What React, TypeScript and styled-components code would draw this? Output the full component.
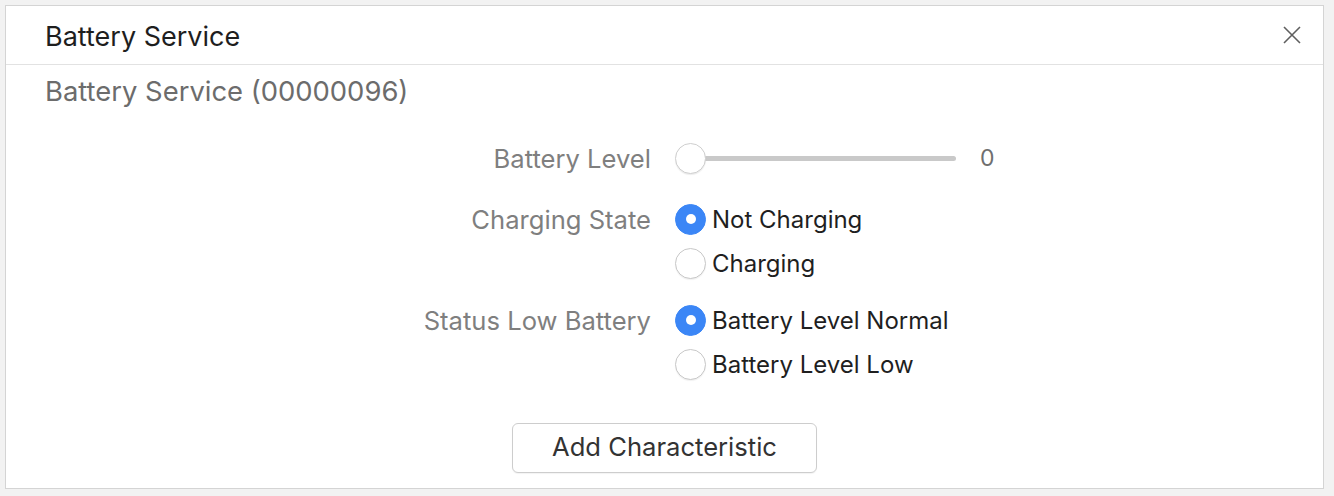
import React, { useState } from "react";
import styled, { createGlobalStyle } from "styled-components";

const GlobalStyle = createGlobalStyle`
  html, body {
    margin: 0;
    padding: 0;
    background: #f2f2f2;
  }
  body {
    font-family: Inter, "Liberation Sans", Arial, sans-serif;
  }
`;

const Panel = styled.div`
  margin: 5px 10px 0 5px;
  height: 484px;
  box-sizing: border-box;
  background: #ffffff;
  border: 1px solid #d4d4d4;
  display: flex;
  flex-direction: column;
`;

const Header = styled.div`
  height: 58px;
  flex-shrink: 0;
  display: flex;
  align-items: center;
  justify-content: space-between;
  padding: 0 20px 0 39px;
  border-bottom: 1px solid #e2e2e2;
`;

const Title = styled.h1`
  margin: 2px 0 0 0;
  font-size: 27px;
  font-weight: 400;
  color: #1e1e1e;
`;

const CloseButton = styled.button`
  border: none;
  background: none;
  padding: 0;
  width: 22px;
  height: 22px;
  display: flex;
  align-items: center;
  justify-content: center;
  cursor: pointer;
`;

const Subtitle = styled.div`
  height: 52px;
  line-height: 52px;
  padding-left: 39px;
  font-size: 27.4px;
  color: #6c6c6c;
`;

const Form = styled.div`
  display: grid;
  grid-template-columns: 645px 1fr;
  column-gap: 24px;
  row-gap: 13px;
  padding-top: 15px;
`;

const Label = styled.div<{ $height: number }>`
  height: ${(p) => p.$height}px;
  display: flex;
  align-items: center;
  justify-content: flex-end;
  font-size: 25.6px;
  color: #7f7f7f;
`;

const SliderRow = styled.div`
  height: 52px;
  display: flex;
  align-items: center;
  gap: 24px;
`;

const Track = styled.div`
  position: relative;
  width: 281px;
  height: 31px;
  display: flex;
  align-items: center;
`;

const TrackLine = styled.div`
  margin-left: 16px;
  flex: 1;
  height: 5px;
  border-radius: 3px;
  background: #c9c9c9;
`;

const Thumb = styled.div`
  position: absolute;
  left: 0;
  top: 0;
  width: 31px;
  height: 31px;
  box-sizing: border-box;
  border-radius: 50%;
  background: #ffffff;
  border: 1px solid #cfcfcf;
  box-shadow: 0 1px 1px rgba(0, 0, 0, 0.08);
`;

const Value = styled.span`
  font-size: 23px;
  color: #6f6f6f;
`;

const OptionGroup = styled.div`
  display: flex;
  flex-direction: column;
`;

const Option = styled.label`
  height: 44px;
  display: flex;
  align-items: center;
  gap: 6px;
  font-size: 24px;
  color: #1f1f1f;
  cursor: pointer;
`;

const RadioDot = styled.span<{ $checked: boolean }>`
  width: 31px;
  height: 31px;
  box-sizing: border-box;
  border-radius: 50%;
  flex-shrink: 0;
  display: flex;
  align-items: center;
  justify-content: center;
  background: ${(p) => (p.$checked ? "#3b86f6" : "#ffffff")};
  border: 1px solid ${(p) => (p.$checked ? "#3b86f6" : "#c8c8c8")};
  box-shadow: ${(p) =>
    p.$checked ? "none" : "0 1px 1px rgba(0, 0, 0, 0.06)"};

  &::after {
    content: "";
    display: ${(p) => (p.$checked ? "block" : "none")};
    width: 10px;
    height: 10px;
    border-radius: 50%;
    background: #ffffff;
  }
`;

const Footer = styled.div`
  display: flex;
  justify-content: center;
  padding-top: 37px;
`;

const AddButton = styled.button`
  width: 305px;
  height: 50px;
  padding: 0 0 4px 0;
  border: 1px solid #cdcdcd;
  border-radius: 6px;
  background: #ffffff;
  font-family: Inter, "Liberation Sans", Arial, sans-serif;
  font-size: 25.6px;
  color: #333333;
  box-shadow: 0 1px 1px rgba(0, 0, 0, 0.05);
  cursor: pointer;
`;

type RadioGroupProps = {
  options: string[];
  value: number;
  onChange: (i: number) => void;
};

const RadioGroup: React.FC<RadioGroupProps> = ({ options, value, onChange }) => (
  <OptionGroup>
    {options.map((opt, i) => (
      <Option key={opt} onClick={() => onChange(i)}>
        <RadioDot $checked={value === i} />
        {opt}
      </Option>
    ))}
  </OptionGroup>
);

const App: React.FC = () => {
  const [charging, setCharging] = useState(0);
  const [lowBattery, setLowBattery] = useState(0);

  return (
    <>
      <GlobalStyle />
      <Panel>
        <Header>
          <Title>Battery Service</Title>
          <CloseButton aria-label="Close">
            <svg width="18" height="18" viewBox="0 0 18 18">
              <path
                d="M1 1 L17 17 M17 1 L1 17"
                stroke="#5f5f5f"
                strokeWidth="1.6"
                fill="none"
              />
            </svg>
          </CloseButton>
        </Header>
        <Subtitle>Battery Service (00000096)</Subtitle>
        <Form>
          <Label $height={52}>Battery Level</Label>
          <SliderRow>
            <Track>
              <Thumb />
              <TrackLine />
            </Track>
            <Value>0</Value>
          </SliderRow>

          <Label $height={44}>Charging State</Label>
          <RadioGroup
            options={["Not Charging", "Charging"]}
            value={charging}
            onChange={setCharging}
          />

          <Label $height={44}>Status Low Battery</Label>
          <RadioGroup
            options={["Battery Level Normal", "Battery Level Low"]}
            value={lowBattery}
            onChange={setLowBattery}
          />
        </Form>
        <Footer>
          <AddButton>Add Characteristic</AddButton>
        </Footer>
      </Panel>
    </>
  );
};

export default App;
